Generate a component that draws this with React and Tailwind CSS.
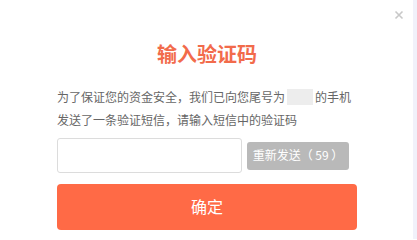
const App = () => {
  return (
    <div
      className="relative w-[417px] h-[239px] bg-white border-r-4 border-[#f1f1fa] overflow-hidden"
      style={{ fontFamily: '"Noto Sans CJK SC", "Noto Sans", sans-serif' }}
    >
      {/* close */}
      <button className="absolute top-[10px] right-[9px] w-[10px] h-[10px] text-[#c8c8c8]" aria-label="close">
        <svg viewBox="0 0 10 10" className="w-[10px] h-[10px]" fill="none" stroke="currentColor" strokeWidth={1.6}>
          <path d="M1.5 1.5l7 7M8.5 1.5l-7 7" />
        </svg>
      </button>

      <div className="pl-[57px] pt-[40px] w-[357px]">
        <h2 className="text-center text-[20px] leading-[28px] font-bold text-[#f26b4b]">输入验证码</h2>

        <p className="mt-[17px] text-[12px] leading-[23px] text-[#666]">
          为了保证您的资金安全，我们已向您尾号为
          <span className="inline-block align-middle w-[26px] h-[16px] mx-[2px] -mt-[3px] bg-[#ededed]" />
          的手机
          <br />
          发送了一条验证短信，请输入短信中的验证码
        </p>

        <div className="mt-[7px] flex items-center gap-[5px]">
          <input className="w-[185px] h-[35px] border border-[#dcdcdc] rounded-[3px] px-2 text-[13px] outline-none" />
          <button className="w-[102px] h-[28px] rounded-[3px] bg-[#b9b9b9] text-white text-[12px] leading-none pb-[1px]">
            重新发送（ 59 ）
          </button>
        </div>

        <button className="mt-[11px] w-[300px] h-[46px] rounded-[4px] bg-[#ff6a46] text-white text-[16px] leading-none pb-[3px]">
          确定
        </button>
      </div>
    </div>
  )
}

export default App
